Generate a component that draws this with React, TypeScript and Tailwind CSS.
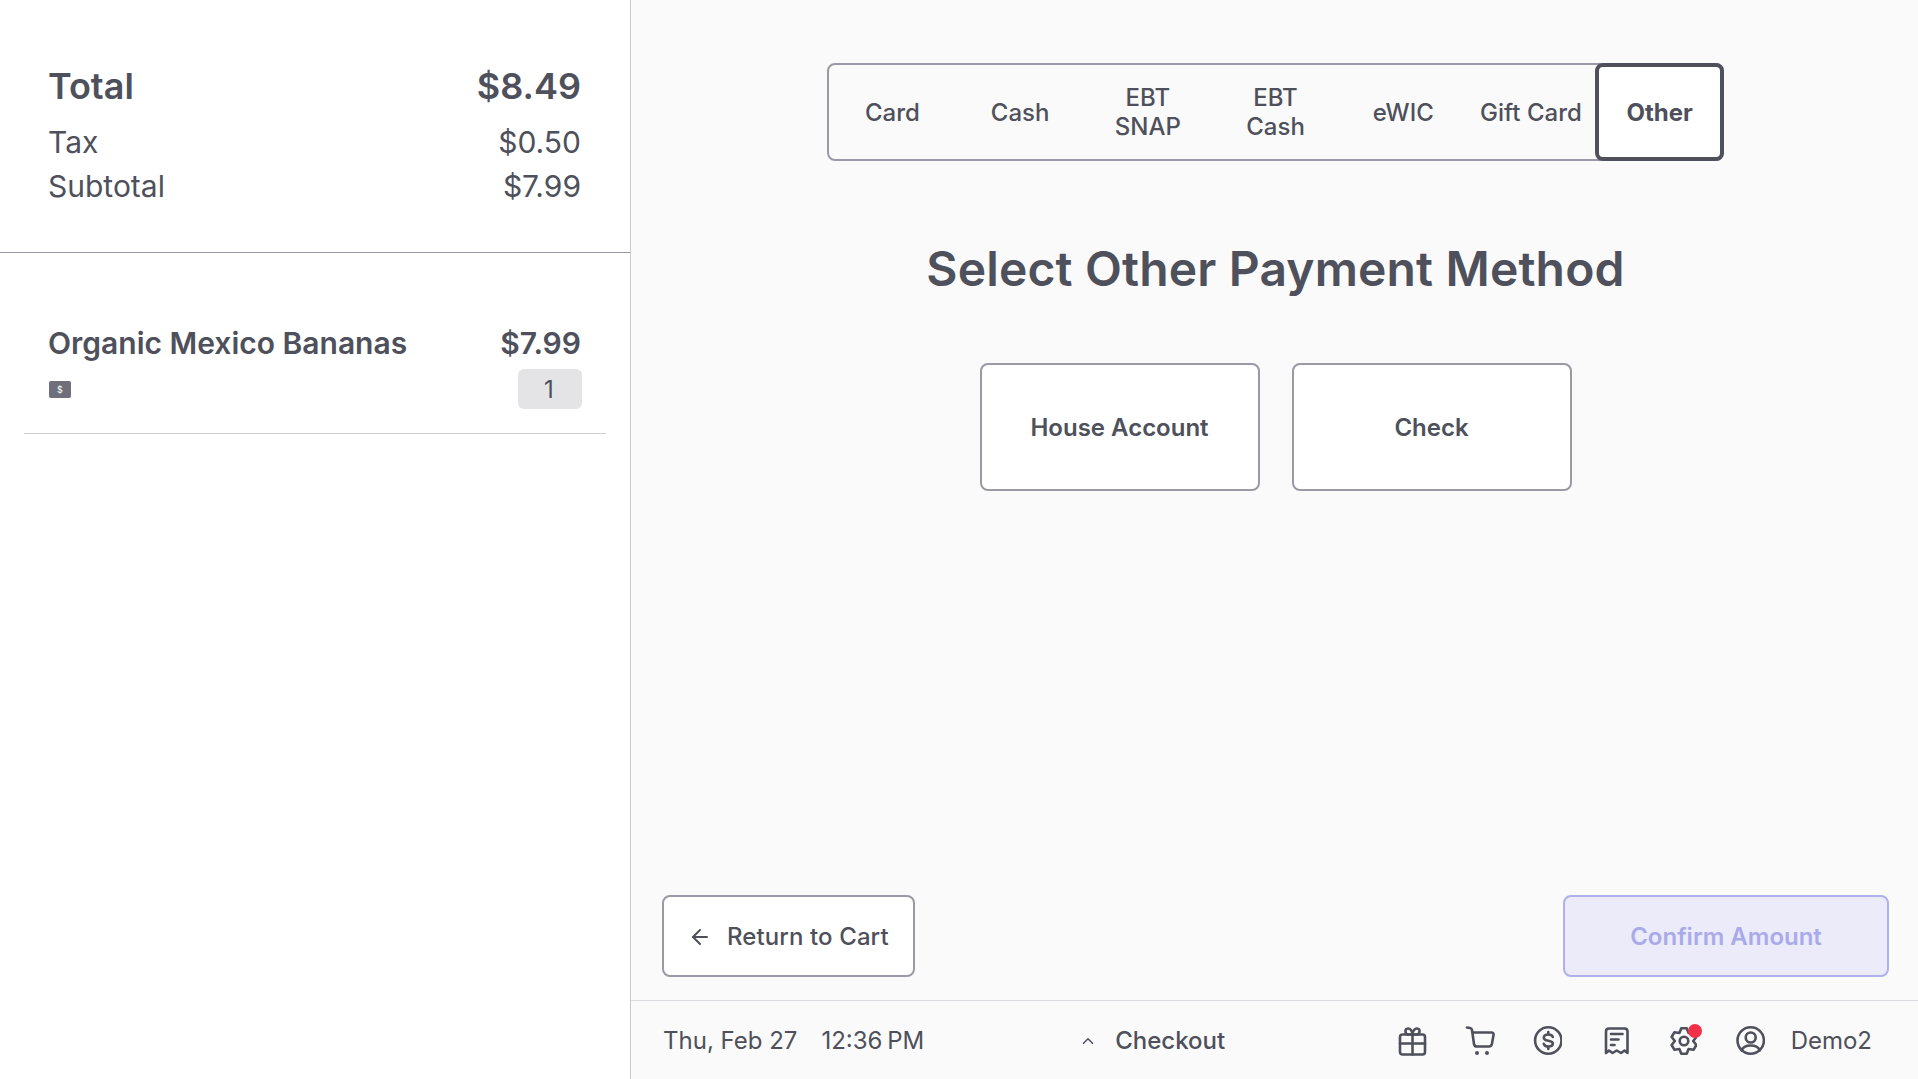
import { ArrowLeft, ChevronUp } from 'lucide-react';

const tabs = [['Card'], ['Cash'], ['EBT', 'SNAP'], ['EBT', 'Cash'], ['eWIC'], ['Gift Card']];

// six rounded lobes around the centre, same outline as the reference gear
const gearPath =
  [0, 1, 2, 3, 4, 5]
    .map((k) => {
      const a = ((k * 60 - 90) * Math.PI) / 180;
      const d = (12 * Math.PI) / 180;
      const pt = (r: number, t: number) => `${(13 + r * Math.cos(t)).toFixed(2)} ${(15 + r * Math.sin(t)).toFixed(2)}`;
      return `${k === 0 ? 'M' : 'L'}${pt(13, a - d)} L${pt(13, a + d)} L${pt(9.2, a + Math.PI / 6)}`;
    })
    .join(' ') + ' Z';

function FooterIcon({ children, dot }: { children: React.ReactNode; dot?: boolean }) {
  return (
    <div className="relative w-[30px] h-[30px]">
      <svg width="30" height="30" viewBox="0 0 30 30" fill="none" stroke="currentColor" strokeWidth="2.6" strokeLinecap="round" strokeLinejoin="round">
        {children}
      </svg>
      {dot && <span className="absolute top-[-2px] right-[-5px] w-[14px] h-[14px] rounded-full bg-[#f43049]" />}
    </div>
  );
}

export default function App() {
  return (
    <div className="flex h-[1079px] w-full bg-[#fafafa] text-[#4e505b] font-['Inter',sans-serif] overflow-hidden">
      <aside className="w-[631px] shrink-0 bg-white border-r border-[#c9c9ce] flex flex-col">
        <div className="h-[253px] border-b border-[#9a9aa6] pl-[48px] pr-[49px] pt-[65px]">
          <div className="flex justify-between items-center text-[36px] leading-[42px] font-semibold">
            <span>Total</span>
            <span>$8.49</span>
          </div>
          <div className="flex justify-between items-center text-[30px] leading-[44px] mt-[13px]">
            <span>Tax</span>
            <span>$0.50</span>
          </div>
          <div className="flex justify-between items-center text-[30px] leading-[44px]">
            <span>Subtotal</span>
            <span>$7.99</span>
          </div>
        </div>
        <div className="mx-[24px] mt-[68px] h-[113px] border-b border-[#cfcfd3] pl-[24px] pr-[25px]">
          <div className="flex justify-between items-center text-[30px] leading-[44px] font-semibold">
            <span>Organic Mexico Bananas</span>
            <span>$7.99</span>
          </div>
          <div className="flex justify-between items-center mt-[4px]">
            <span className="ml-[1px] w-[22px] h-[17px] rounded-[2px] bg-[#6e6f7b] text-white text-[9px] leading-[17px] text-center">$</span>
            <span className="w-[64px] h-[40px] mr-[-1px] pr-[2px] rounded-[6px] bg-[#e4e4e7] text-[24px] leading-[41px] text-center">1</span>
          </div>
        </div>
      </aside>

      <main className="flex-1 flex flex-col min-w-0">
        <div className="flex-1 flex flex-col items-center pt-[63px] pl-[2px]">
          <div className="flex w-[897px] h-[98px] rounded-[8px] border-2 border-[#9a9aa6]">
            {tabs.map((t) => (
              <div key={t.join()} className="w-[128px] pr-[1px] flex flex-col items-center justify-center text-center text-[24px] leading-[29px] font-medium">
                {t.map((line) => (
                  <span key={line}>{line}</span>
                ))}
              </div>
            ))}
            <div className="w-[129px] mr-[-2px] my-[-2px] pt-[1px] rounded-[8px] border-4 border-[#4e505b] bg-white flex items-center justify-center text-[24px] font-bold">
              Other
            </div>
          </div>
          <h1 className="text-[48px] leading-[58px] font-semibold tracking-[0.15px] mt-[79px]">Select Other Payment Method</h1>
          <div className="flex gap-[32px] mt-[65px]">
            <div className="w-[280px] h-[128px] pt-[1px] rounded-[8px] border-2 border-[#9a9aa6] bg-white flex items-center justify-center text-[24px] font-semibold">House Account</div>
            <div className="w-[280px] h-[128px] pt-[1px] rounded-[8px] border-2 border-[#9a9aa6] bg-white flex items-center justify-center text-[24px] font-semibold">Check</div>
          </div>
          <div className="mt-auto w-full flex justify-between pl-[29px] pr-[29px] pb-[23px]">
            <div className="w-[253px] h-[82px] pt-[1px] rounded-[8px] border-2 border-[#9a9aa6] bg-white flex items-center pl-[24px] gap-[15px] text-[24px] font-medium">
              <ArrowLeft size={24} strokeWidth={2} />
              <span className="tracking-[0.1px]">Return to Cart</span>
            </div>
            <div className="w-[326px] h-[82px] pt-[1px] rounded-[8px] border-2 border-[#afb0ec] bg-[#ecebfa] flex items-center justify-center text-[24px] font-semibold text-[#a9aaea]">
              Confirm Amount
            </div>
          </div>
        </div>
        <footer className="h-[79px] shrink-0 border-t border-[#dcdce0] flex items-center pl-[32px] pr-[46px] pt-[2px] text-[24px]">
          <span>Thu, Feb 27</span>
          <span className="ml-[24px] [word-spacing:-2px]">12:36 PM</span>
          <div className="ml-[155px] flex items-center gap-[18px] font-medium">
            <ChevronUp size={18} strokeWidth={2} />
            <span>Checkout</span>
          </div>
          <div className="ml-auto flex items-center gap-[37.5px]">
            <FooterIcon>
              <rect x="3" y="8.5" width="25" height="20" rx="2.5" />
              <path d="M3 17.5H28 M15.5 8.5V28.5" />
              <path d="M15.5 8.5H11C8 8.5 7.5 3 10.5 2.5C13 2 15.5 5 15.5 8.5C15.5 5 18 2 20.5 2.5C23.5 3 23 8.5 20 8.5H15.5" />
            </FooterIcon>
            <FooterIcon>
              <path d="M2 1.5L5 2C6 2.2 6.8 3 7 4L9 18C9.2 19.5 10.5 20.5 12 20.5H24C25.5 20.5 26.6 19.5 26.9 18L28.5 9C28.8 7.5 27.8 6.5 26.5 6.5H7.5" />
              <circle cx="12" cy="27" r="2" fill="currentColor" stroke="none" />
              <circle cx="22" cy="27" r="2" fill="currentColor" stroke="none" />
            </FooterIcon>
            <FooterIcon>
              <g transform="translate(1.3 0)">
                <circle cx="15" cy="14.5" r="13.2" />
                <path d="M19.5 11C19 9.3 17.3 8.5 15 8.5C12.3 8.5 10.5 9.8 10.5 11.7C10.5 16 19.5 13.7 19.5 17.5C19.5 19.3 17.6 20.5 15 20.5C12.6 20.5 11 19.5 10.5 17.8 M15 6V8.5 M15 20.5V23" />
              </g>
            </FooterIcon>
            <FooterIcon>
              <g transform="translate(3.5 0)">
                <path d="M2.5 27V5.5C2.5 3.8 3.8 2.5 5.5 2.5H21C22.7 2.5 24 3.8 24 5.5V27L21 24.5L17.5 27L13.25 24.5L9 27L5.5 24.5Z" />
                <path d="M7.5 8H19 M7.5 13.5H15 M7.5 19H11" />
              </g>
            </FooterIcon>
            <FooterIcon dot>
              <g transform="translate(4 0)">
                <path d={gearPath} />
                <circle cx="13" cy="15" r="4.3" />
              </g>
            </FooterIcon>
            <FooterIcon>
              <g transform="translate(0.7 0)">
                <circle cx="15" cy="14.5" r="13.2" />
                <circle cx="15" cy="11.5" r="5" />
                <path d="M6 24.5C7 21.5 10 19.5 15 19.5C20 19.5 23 21.5 24 24.5" />
              </g>
            </FooterIcon>
          </div>
          <span className="ml-[26px]">Demo2</span>
        </footer>
      </main>
    </div>
  );
}
